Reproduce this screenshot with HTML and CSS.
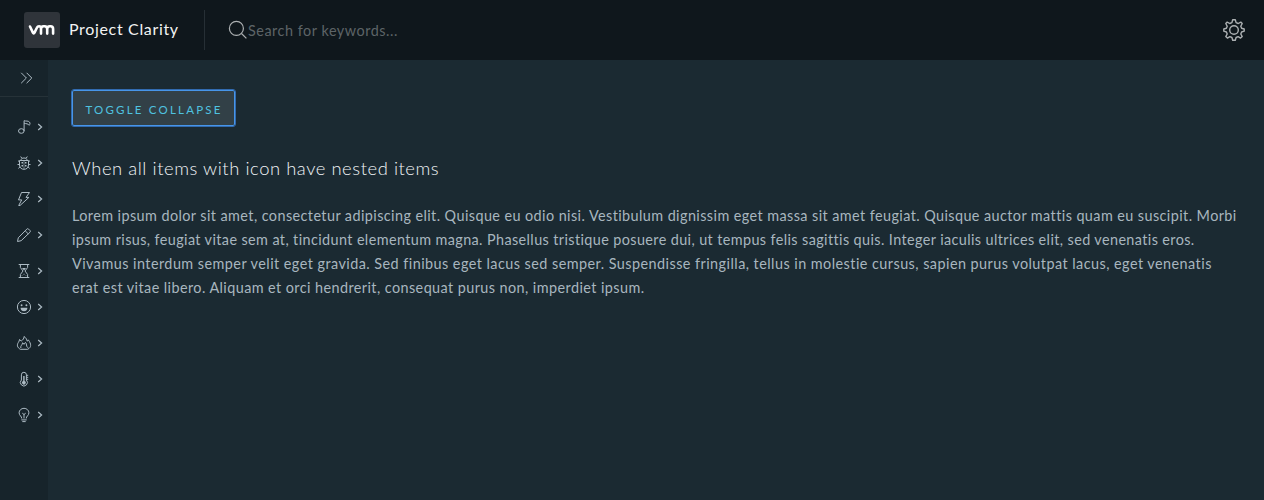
FILE: index.html
```html
<!DOCTYPE html>
<html lang="en">
<head>
<meta charset="utf-8">
<title>Project Clarity</title>
<link rel="stylesheet" href="styles.css">
</head>
<body>
<div class="app">
  <header class="header">
    <div class="branding">
      <svg class="logo" viewBox="0 0 36 36"><rect width="36" height="36" rx="3" fill="#2f343a"/><path d="M6 14.5L8.9 20.6Q9.7 22.1 10.5 20.6L13 15.5Q13.6 14.2 15 14.2Q17 14.2 17 16.2V21.6M17 17Q17 14.2 19.6 14.2H20.6Q23.2 14.2 23.2 17V21.6M23.2 17Q23.2 14.2 25.8 14.2H26.6Q29.1 14.2 29.1 17V21.6" fill="none" stroke="#fff" stroke-width="2.6" stroke-linecap="round" stroke-linejoin="round"/></svg>
      <span class="title">Project Clarity</span>
    </div>
    <div class="search">
      <svg class="search-icon" viewBox="0 0 20 20"><circle cx="8.4" cy="8.4" r="7"/><path d="M13.5 13.5L18.4 18.4"/></svg>
      <span class="placeholder">Search for keywords...</span>
    </div>
    <svg class="settings" viewBox="0 0 24 24"><circle cx="12" cy="12" r="4.3"/><path d="M10.7 1.7H13.3L14.1 4.6L16.3 5.5L18.8 4.1L20.2 5.5L18.8 8.2L19.6 10.3L22.2 11V13.2L19.6 14L18.8 16L20.2 18.6L18.6 20.1L16.1 18.7L14.1 19.5L13.3 22.2H10.7L9.9 19.5L7.9 18.7L5.4 20.1L3.8 18.6L5.2 16L4.4 14L1.8 13.2V11L4.4 10.3L5.2 8.2L3.8 5.5L5.2 4.1L7.7 5.5L9.9 4.6Z"/></svg>
  </header>
  <div class="container">
    <nav class="sidenav">
      <div class="trigger"><svg class="icon" viewBox="0 0 16 16"><path d="M2.2 2.8L7.4 8L2.2 13.2M7.6 2.8L12.8 8L7.6 13.2"/></svg></div>
      <div class="items">
        <div class="item"><svg class="icon" viewBox="0 0 16 16"><ellipse cx="5.3" cy="12" rx="2.8" ry="2.3"/><path d="M8.1 12V1.7C10 2.4 12.2 1.6 13.4 3C14.4 4.2 14 5.3 13.2 6.3M8.1 4.2C10.3 5 12 4.4 13.2 6.3"/></svg><svg class="caret" viewBox="0 0 8 8"><path d="M2.2 1L5.6 4L2.2 7"/></svg></div>
        <div class="item"><svg class="icon" viewBox="0 0 16 16"><path d="M3.5 5.5H12.5V10C12.5 12.8 10.5 14.3 8 14.3S3.5 12.8 3.5 10ZM5 5.5C5 3.6 6.2 3 8 3S11 3.6 11 5.5M5.8 3.2L4.7 1.5M10.2 3.2L11.3 1.5M3.5 7L2 5.6M12.5 7L14 5.6M3.5 9.5H1.5M12.5 9.5H14.5M4 11.7L2.5 13.5M12 11.7L13.5 13.5"/><path class="solid" d="M5.5 7H7V8.5H5.5ZM9 7H10.5V8.5H9ZM5.5 10H7V11.5H5.5ZM9 10H10.5V11.5H9ZM7.7 6H8.3V14H7.7Z"/></svg><svg class="caret" viewBox="0 0 8 8"><path d="M2.2 1L5.6 4L2.2 7"/></svg></div>
        <div class="item"><svg class="icon" viewBox="0 0 16 16"><path d="M5.5 1.5H13.5L10 6.4H12.9L4 14.5H2.7L5.7 8.9H2.5Z"/></svg><svg class="caret" viewBox="0 0 8 8"><path d="M2.2 1L5.6 4L2.2 7"/></svg></div>
        <div class="item"><svg class="icon" viewBox="0 0 16 16"><path d="M1.5 14.5L2.3 10.8L10.8 2.1Q11.7 1.2 12.6 2.1L14 3.5Q14.8 4.3 14 5.2L5.2 13.7ZM9.2 3.8L12.3 6.9"/></svg><svg class="caret" viewBox="0 0 8 8"><path d="M2.2 1L5.6 4L2.2 7"/></svg></div>
        <div class="item"><svg class="icon" viewBox="0 0 16 16"><path d="M2.7 1.5H13.3M2.7 14.5H13.3M4.4 1.5V4.5L7 8L4.4 11.5V14.5M11.6 1.5V4.5L9 8L11.6 11.5V14.5"/><path class="solid" d="M6 5H10L8 7.6ZM5.7 13.2L8 10.5L10.3 13.2V12.5L8 11.3L5.7 12.5Z"/></svg><svg class="caret" viewBox="0 0 8 8"><path d="M2.2 1L5.6 4L2.2 7"/></svg></div>
        <div class="item"><svg class="icon" viewBox="0 0 16 16"><circle cx="8" cy="8" r="6.6"/><circle class="solid" cx="5.6" cy="6.2" r=".95"/><circle class="solid" cx="10.4" cy="6.2" r=".95"/><path class="solid" d="M4.6 8.8H11.4A3.4 3.4 0 0 1 4.6 8.8Z"/></svg><svg class="caret" viewBox="0 0 8 8"><path d="M2.2 1L5.6 4L2.2 7"/></svg></div>
        <div class="item"><svg class="icon" viewBox="0 0 16 16"><path d="M4.4 14.3C1 12.5.8 9.7 2.3 7.5C3 6.5 3.5 5.6 3.5 4.5L5.2 6C7.2 4.8 8 3.5 8 1.5C10.3 3 11 4.7 11.1 6.2L12.4 5C15.4 9 15.6 12.3 11.7 14.3ZM4.8 13C4.2 10.6 6.5 10 6.6 7.8L8.2 9.3L9.4 7.4C11.5 9 9.4 10.8 12 12.8"/></svg><svg class="caret" viewBox="0 0 8 8"><path d="M2.2 1L5.6 4L2.2 7"/></svg></div>
        <div class="item"><svg class="icon" viewBox="0 0 16 16"><path d="M5.4 9V3.8A2.5 2.5 0 0 1 10.4 3.8V9A3.5 3.5 0 1 1 5.4 9ZM10.4 4.3H12.2M10.4 6.3H12.2M10.4 8.3H12.2"/><path class="solid" d="M7.2 5H8.6V10A1.8 1.8 0 1 1 7.2 10Z"/></svg><svg class="caret" viewBox="0 0 8 8"><path d="M2.2 1L5.6 4L2.2 7"/></svg></div>
        <div class="item"><svg class="icon" viewBox="0 0 16 16"><path d="M5.8 11.5C5.8 9.2 3.1 8.6 3.1 5.8A4.9 4.5 0 0 1 12.9 5.8C12.9 8.6 10.2 9.2 10.2 11.5M5.3 12.9H10.7M6.3 14.6H9.7M8 11.5V7.3M6.3 6.2L8 7.5L9.7 6.2"/></svg><svg class="caret" viewBox="0 0 8 8"><path d="M2.2 1L5.6 4L2.2 7"/></svg></div>
      </div>
    </nav>
    <main class="content">
      <button class="toggle">TOGGLE COLLAPSE</button>
      <h4 class="heading">When all items with icon have nested items</h4>
      <p class="text"><span class="l1">Lorem ipsum dolor sit amet, consectetur adipiscing elit. Quisque eu odio nisi. Vestibulum dignissim eget massa sit amet feugiat. Quisque auctor mattis quam eu suscipit. Morbi</span> <span class="l2">ipsum risus, feugiat vitae sem at, tincidunt elementum magna. Phasellus tristique posuere dui, ut tempus felis sagittis quis. Integer iaculis ultrices elit, sed venenatis eros.</span> <span class="l3">Vivamus interdum semper velit eget gravida. Sed finibus eget lacus sed semper. Suspendisse fringilla, tellus in molestie cursus, sapien purus volutpat lacus, eget venenatis</span> <span class="l4">erat est vitae libero. Aliquam et orci hendrerit, consequat purus non, imperdiet ipsum.</span></p>
    </main>
  </div>
</div>
</body>
</html>
```
FILE: styles.css
```css
* { box-sizing: border-box; }
body { margin: 0; font-family: Metropolis, Lato, "Liberation Sans", sans-serif; background: #1b2a32; }
svg { display: block; flex: none; fill: none; }
.app { height: 500px; display: flex; flex-direction: column; overflow: hidden; }
.header { height: 60px; flex: none; display: flex; align-items: center; background: #0f171c; padding-right: 18px; }
.branding { display: flex; align-items: center; gap: 9px; width: 204px; padding-left: 24px; }
.logo { width: 36px; height: 36px; }
.title { font-size: 16px; line-height: 24px; color: #f2f3f3; letter-spacing: .66px; white-space: nowrap; padding-bottom: 2px; }
.search { flex: 1; height: 40px; display: flex; align-items: center; border-left: 1px solid #262f35; padding-left: 23px; }
.search-icon { width: 20px; height: 20px; stroke: #acb0b2; stroke-width: 1.2; }
.placeholder { font-size: 14.4px; line-height: 24px; color: #5d6467; letter-spacing: .53px; padding-top: 2px; }
.settings { width: 24px; height: 24px; stroke: #acb0b2; stroke-width: 1.4; stroke-linejoin: round; }
.container { flex: 1; display: flex; }
.sidenav { width: 48px; flex: none; background: #17242b; }
.trigger { height: 37px; border-bottom: 1px solid #263238; padding: 10px 0 0 19px; }
.icon { width: 16px; height: 16px; stroke: #adbbc4; stroke-width: 1; stroke-linejoin: round; }
.solid { fill: #adbbc4; stroke: none; }
.items { padding-top: 12px; }
.item { height: 36px; display: flex; align-items: center; gap: 4px; padding-left: 16px; }
.caret { width: 8px; height: 8px; stroke: #adbbc4; stroke-width: 1.2; }
.content { flex: 1; padding: 30px 24px 0; }
.toggle { display: block; width: 163px; height: 36px; padding: 2px 0 0; border: 1px solid #4795e8; outline: 1px solid #326bb0; outline-offset: 0; border-radius: 2px; background: #324047; color: #4fc3e0; font: 11.5px/34px Metropolis, Lato, sans-serif; letter-spacing: 2.2px; text-indent: 1px; text-align: center; }
.heading { margin: 30px 0 0; font-size: 18.4px; line-height: 24px; font-weight: 300; color: #f1f4f7; letter-spacing: .56px; }
.text { margin: 24px 0 0; font-size: 14.4px; line-height: 24px; color: #a8b6bf; }
.text span { display: block; width: max-content; }
.text .l1 { letter-spacing: .42px; }
.text .l2 { letter-spacing: .394px; }
.text .l3 { letter-spacing: .455px; }
.text .l4 { letter-spacing: .425px; }
```
